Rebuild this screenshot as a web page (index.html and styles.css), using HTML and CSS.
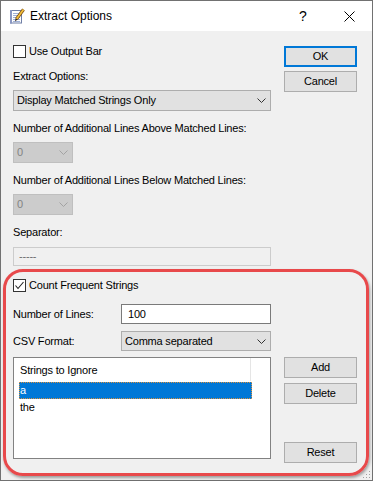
FILE: index.html
```html
<!DOCTYPE html>
<html>
<head>
<meta charset="utf-8">
<link rel="stylesheet" href="styles.css">
</head>
<body>
<div class="window">
  <div class="titlebar">
    <svg class="app-icon" width="16" height="16" viewBox="0 0 16 16">
      <rect x="1.5" y="2.5" width="11" height="12.5" fill="#fdfdfd" stroke="#6f7fa6"/>
      <rect x="1" y="2" width="2" height="13.5" fill="#8a97c2"/>
      <line x1="4" y1="5.5" x2="11" y2="5.5" stroke="#9fb0d6"/>
      <line x1="4" y1="7.5" x2="11" y2="7.5" stroke="#9fb0d6"/>
      <line x1="4" y1="9.5" x2="11" y2="9.5" stroke="#9fb0d6"/>
      <line x1="4" y1="11.5" x2="11" y2="11.5" stroke="#9fb0d6"/>
      <line x1="4" y1="13.5" x2="11" y2="13.5" stroke="#9fb0d6"/>
      <line x1="14.5" y1="1.5" x2="7.5" y2="11" stroke="#7a4a12" stroke-width="3.2"/>
      <line x1="14.5" y1="1.5" x2="7.5" y2="11" stroke="#f2c03c" stroke-width="1.8"/>
      <polygon points="6.6,10.2 8.6,11.6 6,13.6" fill="#3a2a1a"/>
    </svg>
    <span class="title">Extract Options</span>
    <span class="caption-btn help">?</span>
    <span class="caption-btn close">
      <svg width="11" height="11" viewBox="0 0 11 11"><path d="M0.5 0.5 L10.5 10.5 M10.5 0.5 L0.5 10.5" stroke="#000" stroke-width="1" fill="none"/></svg>
    </span>
  </div>

  <div class="body">
    <div class="upper">
      <div class="col-left">
        <div class="check"><span class="box"></span><span>Use Output Bar</span></div>
        <div class="label gap10">Extract Options:</div>
        <div class="combo full gap6"><span>Display Matched Strings Only</span>
          <svg class="chev" width="9" height="5" viewBox="0 0 9 5"><polyline points="0.5,0.5 4.5,4.5 8.5,0.5" fill="none" stroke="#333"/></svg></div>
        <div class="label gap10">Number of Additional Lines Above Matched Lines:</div>
        <div class="combo small disabled gap6"><span>0</span>
          <svg class="chev" width="9" height="5" viewBox="0 0 9 5"><polyline points="0.5,0.5 4.5,4.5 8.5,0.5" fill="none" stroke="#a3a3a3"/></svg></div>
        <div class="label gap10">Number of Additional Lines Below Matched Lines:</div>
        <div class="combo small disabled gap6"><span>0</span>
          <svg class="chev" width="9" height="5" viewBox="0 0 9 5"><polyline points="0.5,0.5 4.5,4.5 8.5,0.5" fill="none" stroke="#a3a3a3"/></svg></div>
        <div class="label gap10">Separator:</div>
        <div class="sep-input">-----</div>
      </div>
      <div class="col-right">
        <div class="btn default">OK</div>
        <div class="btn gap4">Cancel</div>
      </div>
    </div>

    <div class="ring">
      <div class="check"><span class="box checked">
        <svg width="11" height="11" viewBox="0 0 11 11"><polyline points="1.5,5.5 4,8.5 9.5,2" fill="none" stroke="#222" stroke-width="1.1"/></svg>
      </span><span>Count Frequent Strings</span></div>
      <div class="form">
        <div class="label">Number of Lines:</div>
        <div class="text-input">100</div>
        <div class="label">CSV Format:</div>
        <div class="combo"><span>Comma separated</span>
          <svg class="chev" width="9" height="5" viewBox="0 0 9 5"><polyline points="0.5,0.5 4.5,4.5 8.5,0.5" fill="none" stroke="#333"/></svg></div>
      </div>
      <div class="list-row">
        <div class="listbox">
          <div class="list-header"><span class="col-head">Strings to Ignore</span></div>
          <div class="list-item selected">a</div>
          <div class="list-item">the</div>
        </div>
        <div class="list-buttons">
          <div class="btn">Add</div>
          <div class="btn gap5">Delete</div>
          <div class="btn push">Reset</div>
        </div>
      </div>
    </div>
  </div>

  <svg class="grip" width="9" height="9" viewBox="0 0 9 9">
    <rect x="7" y="1" width="1" height="1" fill="#a0a0a0"/>
    <rect x="4" y="4" width="1" height="1" fill="#a0a0a0"/>
    <rect x="7" y="4" width="1" height="1" fill="#a0a0a0"/>
    <rect x="1" y="7" width="1" height="1" fill="#a0a0a0"/>
    <rect x="4" y="7" width="1" height="1" fill="#a0a0a0"/>
    <rect x="7" y="7" width="1" height="1" fill="#a0a0a0"/>
  </svg>
</div>
</body>
</html>
```

FILE: styles.css
```css
* {
  box-sizing: border-box;
  margin: 0;
  padding: 0;
}

html, body {
  width: 373px;
  height: 481px;
  overflow: hidden;
}

body {
  font-family: "Liberation Sans", Arial, sans-serif;
  font-size: 11px;
  letter-spacing: -0.2px;
  line-height: 15px;
  color: #000;
  background: #fff;
}

.window {
  position: relative;
  width: 373px;
  height: 481px;
  border: 1px solid #717171;
  background: #f0f0f0;
  display: flex;
  flex-direction: column;
}

/* title bar */
.titlebar {
  flex-shrink: 0;
  height: 30px;
  background: #fff;
  display: flex;
  align-items: center;
  padding-left: 8px;
  font-size: 12px;
  letter-spacing: 0;
}

.app-icon {
  flex-shrink: 0;
}

.title {
  margin-left: 5px;
}

.caption-btn {
  width: 46px;
  height: 30px;
  display: flex;
  align-items: center;
  justify-content: center;
}

.help {
  margin-left: auto;
  font-size: 14px;
  padding-top: 1px;
}

.close svg {
  display: block;
}

/* body */
.body {
  flex: 1;
  padding: 13px 15px 0 12px;
}

.upper {
  display: grid;
  grid-template-columns: 258px 73px;
  column-gap: 13px;
}

.col-left {
  display: flex;
  flex-direction: column;
  align-items: flex-start;
}

.col-right {
  padding-top: 2px;
  display: flex;
  flex-direction: column;
}

.gap4 { margin-top: 4px; }
.gap5 { margin-top: 5px; }
.gap6 { margin-top: 6px; }
.gap10 { margin-top: 10px; }

.check {
  display: flex;
  align-items: center;
  height: 15px;
}

.box {
  width: 13px;
  height: 13px;
  border: 1px solid #333;
  background: #fff;
  margin-right: 3px;
  display: flex;
  align-items: center;
  justify-content: center;
}

.box svg {
  display: block;
}

.label {
  height: 15px;
  white-space: nowrap;
}

.combo {
  height: 21px;
  border: 1px solid #adadad;
  background: #e1e1e1;
  display: flex;
  align-items: center;
  justify-content: space-between;
  padding: 0 4px 0 3px;
  white-space: nowrap;
}

.combo.full {
  width: 258px;
}

.combo.small {
  width: 60px;
  padding-left: 3px;
}

.combo.disabled {
  background: #cccccc;
  border-color: #bfbfbf;
  color: #838383;
}

.chev {
  display: block;
  flex-shrink: 0;
}

.sep-input {
  margin-top: 7px;
  width: 258px;
  height: 19px;
  border: 1px solid #cccccc;
  background: #f0f0f0;
  color: #6d6d6d;
  padding-left: 5px;
  line-height: 17px;
}

.btn {
  height: 21px;
  border: 1px solid #adadad;
  background: #e1e1e1;
  display: flex;
  align-items: center;
  justify-content: center;
}

.btn.default {
  border: 2px solid #0078d7;
}

/* highlighted group */
.ring {
  margin: 3px -12px 0 -10px;
  border: 3px solid #e8494b;
  border-radius: 20px;
  box-shadow: 1px 2px 3px rgba(0, 0, 0, 0.35);
  padding: 6px 9px 10px 7px;
}

.form {
  margin-top: 11px;
  width: 258px;
  display: grid;
  grid-template-columns: 108px 150px;
  grid-auto-rows: 20px;
  row-gap: 7px;
  align-items: center;
}

.form .combo {
  height: 20px;
}

.text-input {
  height: 20px;
  border: 1px solid #7a7a7a;
  background: #fff;
  padding-left: 6px;
  line-height: 18px;
}

.list-row {
  margin-top: 6px;
  display: grid;
  grid-template-columns: 258px 73px;
  column-gap: 13px;
}

.listbox {
  height: 102px;
  border: 1px solid #828282;
  background: #fff;
}

.list-header {
  height: 24px;
  display: flex;
}

.col-head {
  width: 237px;
  height: 23px;
  line-height: 24px;
  padding-left: 6px;
  border-right: 1px solid #e5e5e5;
}

.list-item {
  margin-left: 5px;
  width: 233px;
  height: 17px;
  line-height: 17px;
  padding-left: 1px;
}

.list-item.selected {
  background: #0078d7;
  color: #fff;
  outline: 1px dotted #d9913e;
  outline-offset: -1px;
}

.list-buttons {
  display: flex;
  flex-direction: column;
  height: 106px;
}

.push {
  margin-top: auto;
}

.grip {
  position: absolute;
  right: 1px;
  bottom: 1px;
}
```
